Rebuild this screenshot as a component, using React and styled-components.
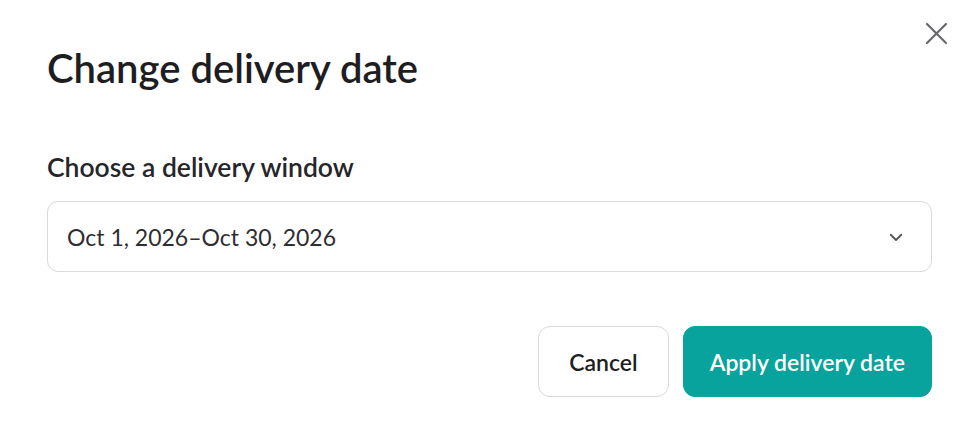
import React from "react";
import styled, { createGlobalStyle } from "styled-components";

const GlobalStyle = createGlobalStyle`
  html, body {
    margin: 0;
    padding: 0;
    background: #ffffff;
  }
  body {
    font-family: Lato, "Noto Sans", sans-serif;
    color: #1f1f23;
  }
`;

const Dialog = styled.div`
  position: relative;
  box-sizing: border-box;
  width: 978px;
  height: 444px;
  padding: 44px 46px 0 47px;
  background: #fff;
`;

const CloseButton = styled.button`
  position: absolute;
  top: 22px;
  right: 30px;
  width: 23px;
  height: 23px;
  padding: 0;
  border: none;
  background: none;
  color: #68686d;
  cursor: pointer;
  display: flex;
  align-items: center;
  justify-content: center;
`;

const Title = styled.h1`
  margin: 0;
  font-size: 40px;
  font-weight: 600;
  line-height: 48px;
  color: #1e1e22;
`;

const Field = styled.div`
  margin-top: 59px;
  display: flex;
  flex-direction: column;
  gap: 18px;
`;

const Label = styled.label`
  font-size: 26.5px;
  font-weight: 600;
  line-height: 32px;
  color: #25252a;
`;

const Select = styled.div`
  box-sizing: border-box;
  height: 71px;
  padding: 0 26px 0 19px;
  border: 1.5px solid #d9d9de;
  border-radius: 11px;
  display: flex;
  align-items: center;
  justify-content: space-between;
  font-size: 23px;
  color: #2d2d32;
`;

const Actions = styled.div`
  margin-top: 54px;
  display: flex;
  justify-content: flex-end;
  gap: 14px;
`;

const Button = styled.button`
  box-sizing: border-box;
  height: 71px;
  padding: 0 ${(p) => (p.$primary ? "26px" : "30px")};
  border-radius: 12px;
  border: 1.5px solid ${(p) => (p.$primary ? "#08a39c" : "#d9d9de")};
  background: ${(p) => (p.$primary ? "#08a39c" : "#ffffff")};
  color: ${(p) => (p.$primary ? "#ffffff" : "#1f1f23")};
  font-family: Lato, "Noto Sans", sans-serif;
  font-size: 23px;
  font-weight: 600;
  cursor: pointer;
`;

function Chevron() {
  return (
    <svg width="18" height="18" viewBox="0 0 24 24" fill="none" stroke="#55555a" strokeWidth="2.4" strokeLinecap="round" strokeLinejoin="round">
      <path d="M5 9l7 7 7-7" />
    </svg>
  );
}

function CloseIcon() {
  return (
    <svg width="23" height="23" viewBox="0 0 23 23" fill="none" stroke="currentColor" strokeWidth="2.2" strokeLinecap="round">
      <path d="M2 2l19 19M21 2L2 21" />
    </svg>
  );
}

export default function App() {
  return (
    <>
      <GlobalStyle />
      <Dialog>
        <CloseButton aria-label="Close">
          <CloseIcon />
        </CloseButton>
        <Title>Change delivery date</Title>
        <Field>
          <Label>Choose a delivery window</Label>
          <Select>
            <span>Oct 1, 2026–Oct 30, 2026</span>
            <Chevron />
          </Select>
        </Field>
        <Actions>
          <Button>Cancel</Button>
          <Button $primary>Apply delivery date</Button>
        </Actions>
      </Dialog>
    </>
  );
}
